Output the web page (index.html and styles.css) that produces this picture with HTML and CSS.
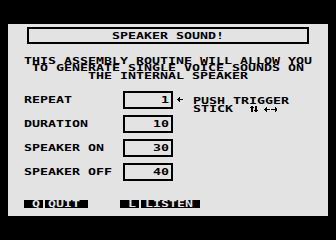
FILE: index.html
```
<!DOCTYPE html>
<html>
<head>
<meta charset="utf-8">
<link rel="stylesheet" href="styles.css">
</head>
<body>
<div class="screen">
  <div class="title"><div class="tx">SPEAKER SOUND!</div></div>
  <div class="intro">
    <div class="tx">THIS ASSEMBLY ROUTINE WILL ALLOW YOU</div>
    <div class="tx">TO GENERATE SINGLE VOICE SOUNDS ON</div>
    <div class="tx">THE INTERNAL SPEAKER</div>
  </div>
  <div class="fields">
    <div class="row">
      <div class="label tx">REPEAT</div>
      <div class="field"><div class="tx">1</div></div>
      <div class="hint">
        <svg class="hint-arrow" width="6" height="5" viewBox="0 0 6 5" shape-rendering="crispEdges">
          <rect x="2" y="0" width="1" height="1"/><rect x="1" y="1" width="2" height="1"/><rect x="0" y="2" width="6" height="1"/><rect x="1" y="3" width="2" height="1"/><rect x="2" y="4" width="1" height="1"/>
        </svg>
        <div class="hint-text">
          <div class="tx">PUSH TRIGGER</div>
          <div class="stick-line">
            <span class="tx">STICK</span>
            <svg class="dirs" width="28" height="6" viewBox="0 0 28 6" shape-rendering="crispEdges">
              <rect x="1" y="0" width="2" height="1"/><rect x="0" y="1" width="4" height="1"/><rect x="1" y="2" width="2" height="4"/>
              <rect x="5" y="0" width="2" height="4"/><rect x="4" y="4" width="4" height="1"/><rect x="5" y="5" width="2" height="1"/>
              <rect x="16" y="1" width="1" height="1"/><rect x="15" y="2" width="2" height="1"/><rect x="14" y="3" width="6" height="1"/><rect x="15" y="4" width="2" height="1"/><rect x="16" y="5" width="1" height="1"/>
              <rect x="25" y="1" width="1" height="1"/><rect x="25" y="2" width="2" height="1"/><rect x="21" y="3" width="6" height="1"/><rect x="25" y="4" width="2" height="1"/><rect x="25" y="5" width="1" height="1"/>
            </svg>
          </div>
        </div>
      </div>
    </div>
    <div class="row">
      <div class="label tx">DURATION</div>
      <div class="field"><div class="tx">10</div></div>
    </div>
    <div class="row">
      <div class="label tx">SPEAKER ON</div>
      <div class="field"><div class="tx">30</div></div>
    </div>
    <div class="row">
      <div class="label tx">SPEAKER OFF</div>
      <div class="field"><div class="tx">40</div></div>
    </div>
  </div>
  <div class="keys">
    <div class="key k-q"><div class="tx">Q</div></div>
    <div class="key k-quit"><div class="tx">QUIT</div></div>
    <div class="key k-l"><div class="tx">L</div></div>
    <div class="key k-listen"><div class="tx">LISTEN</div></div>
  </div>
</div>
</body>
</html>
```
FILE: styles.css
```
* { box-sizing: border-box; }
html, body {
  margin: 0;
  width: 336px;
  height: 240px;
  overflow: hidden;
  background: #000;
}
body { padding: 24px 8px; }
.screen {
  width: 320px;
  height: 192px;
  background: #e3e3e3;
  color: #000;
  font-family: "DejaVu Sans Mono", monospace;
  font-weight: bold;
  font-size: 13.3px;
  padding-top: 3px;
}
.tx {
  display: block;
  white-space: pre;
  transform: scaleY(0.72);
}
.title {
  margin: 0 19px;
  height: 17px;
  border: 2px solid #000;
  padding-top: 1px;
  line-height: 12px;
  text-align: center;
}
.intro {
  margin-top: 12.5px;
  line-height: 7.5px;
  text-align: center;
}
.fields {
  margin-top: 9px;
  padding-left: 16px;
}
.row {
  display: flex;
  align-items: flex-start;
  height: 24px;
}
.label {
  width: 99px;
  line-height: 24px;
}
.field {
  width: 50px;
  height: 18px;
  margin-top: 3px;
  border: 2px solid #000;
  line-height: 14px;
  text-align: right;
  padding-right: 2px;
}
.hint {
  display: flex;
  align-items: flex-start;
}
.hint-arrow {
  display: block;
  margin: 9px 10px 0 4px;
}
.hint-text {
  margin-top: 9px;
  line-height: 7.5px;
}
.stick-line {
  display: flex;
  align-items: flex-start;
}
.dirs {
  display: block;
  margin-left: 17px;
  margin-top: 1px;
}
.keys {
  display: flex;
  margin-top: 16px;
  padding-left: 16px;
}
.key {
  height: 8px;
  line-height: 8px;
  background: #000;
  color: #e3e3e3;
}
.k-q { width: 19px; padding-left: 8px; }
.k-quit { width: 43px; margin-left: 2px; padding-left: 3px; }
.k-l { width: 19px; margin-left: 32px; padding-left: 8px; }
.k-listen { width: 59px; margin-left: 2px; padding-left: 4px; }
```
